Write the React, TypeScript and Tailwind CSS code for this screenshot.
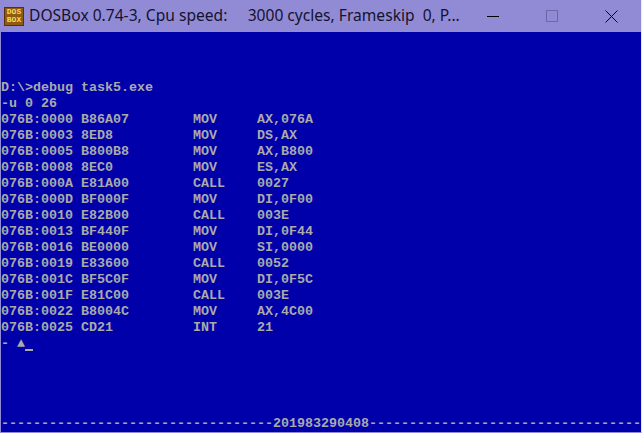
const rows: [string, string, string, string][] = [
  ["076B:0000", "B86A07", "MOV", "AX,076A"],
  ["076B:0003", "8ED8", "MOV", "DS,AX"],
  ["076B:0005", "B800B8", "MOV", "AX,B800"],
  ["076B:0008", "8EC0", "MOV", "ES,AX"],
  ["076B:000A", "E81A00", "CALL", "0027"],
  ["076B:000D", "BF000F", "MOV", "DI,0F00"],
  ["076B:0010", "E82B00", "CALL", "003E"],
  ["076B:0013", "BF440F", "MOV", "DI,0F44"],
  ["076B:0016", "BE0000", "MOV", "SI,0000"],
  ["076B:0019", "E83600", "CALL", "0052"],
  ["076B:001C", "BF5C0F", "MOV", "DI,0F5C"],
  ["076B:001F", "E81C00", "CALL", "003E"],
  ["076B:0022", "B8004C", "MOV", "AX,4C00"],
  ["076B:0025", "CD21", "INT", "21"],
];

function Row({ r }: { r: [string, string, string, string] }) {
  return (
    <div className="flex h-4">
      <span className="w-[80px]">{r[0]}</span>
      <span className="w-[112px]">{r[1]}</span>
      <span className="w-[64px]">{r[2]}</span>
      <span>{r[3]}</span>
    </div>
  );
}

function DosIcon() {
  return (
    <div className="flex h-[19px] w-5 flex-col items-center justify-center border border-[#5a3208] bg-[#8f5a12] font-['Liberation_Mono',monospace] text-[8px] leading-[8px] font-bold text-[#f8dc58]">
      <span>DOS</span>
      <span>BOX</span>
    </div>
  );
}

export default function App() {
  return (
    <div className="flex h-[433px] w-[642px] flex-col overflow-hidden border-r border-b border-l border-r-[#e8e8f4] border-b-[#918bd6] border-l-[#918bd6] bg-[#918bd6]">
      <div className="flex h-8 shrink-0 items-center">
        <div className="ml-[3px] mr-[5px]">
          <DosIcon />
        </div>
        <span className="flex-1 font-['Noto_Sans',sans-serif] text-[15.6px] whitespace-pre text-[#14122e]">
          DOSBox 0.74-3, Cpu speed:{"     "}3000 cycles, Frameskip{"  "}0, P...
        </span>
        <svg width="13" height="13" viewBox="0 0 13 13" className="mr-[46px]">
          <path d="M0 6.5H12" stroke="#000" strokeWidth="1" />
        </svg>
        <svg width="13" height="13" viewBox="0 0 13 13" className="mr-[46px]">
          <rect x="0.5" y="0.5" width="11" height="11" fill="none" stroke="#6a66a8" strokeWidth="1" />
        </svg>
        <svg width="13" height="13" viewBox="0 0 13 13" className="mr-[23px]">
          <path d="M0.5 0.5L12.5 12.5M12.5 0.5L0.5 12.5" stroke="#000" strokeWidth="1" />
        </svg>
      </div>
      <div className="h-[400px] w-[640px] bg-[#0000aa] pt-12 font-['Liberation_Mono',monospace] text-[13.33px] leading-4 font-bold whitespace-pre text-[#aaaaaa]">
        <div className="h-4">{"D:\\>debug task5.exe"}</div>
        <div className="h-4">-u 0 26</div>
        {rows.map((r) => (
          <Row key={r[0]} r={r} />
        ))}
        <div className="flex h-4">
          <span className="w-4">-</span>
          <span className="w-2 text-center">▲</span>
          <span className="mt-[13px] h-[2px] w-2 bg-[#aaaaaa]" />
        </div>
        <div className="mt-[64px] h-4">
          {"-".repeat(34)}201983290408{"-".repeat(34)}
        </div>
      </div>
    </div>
  );
}
